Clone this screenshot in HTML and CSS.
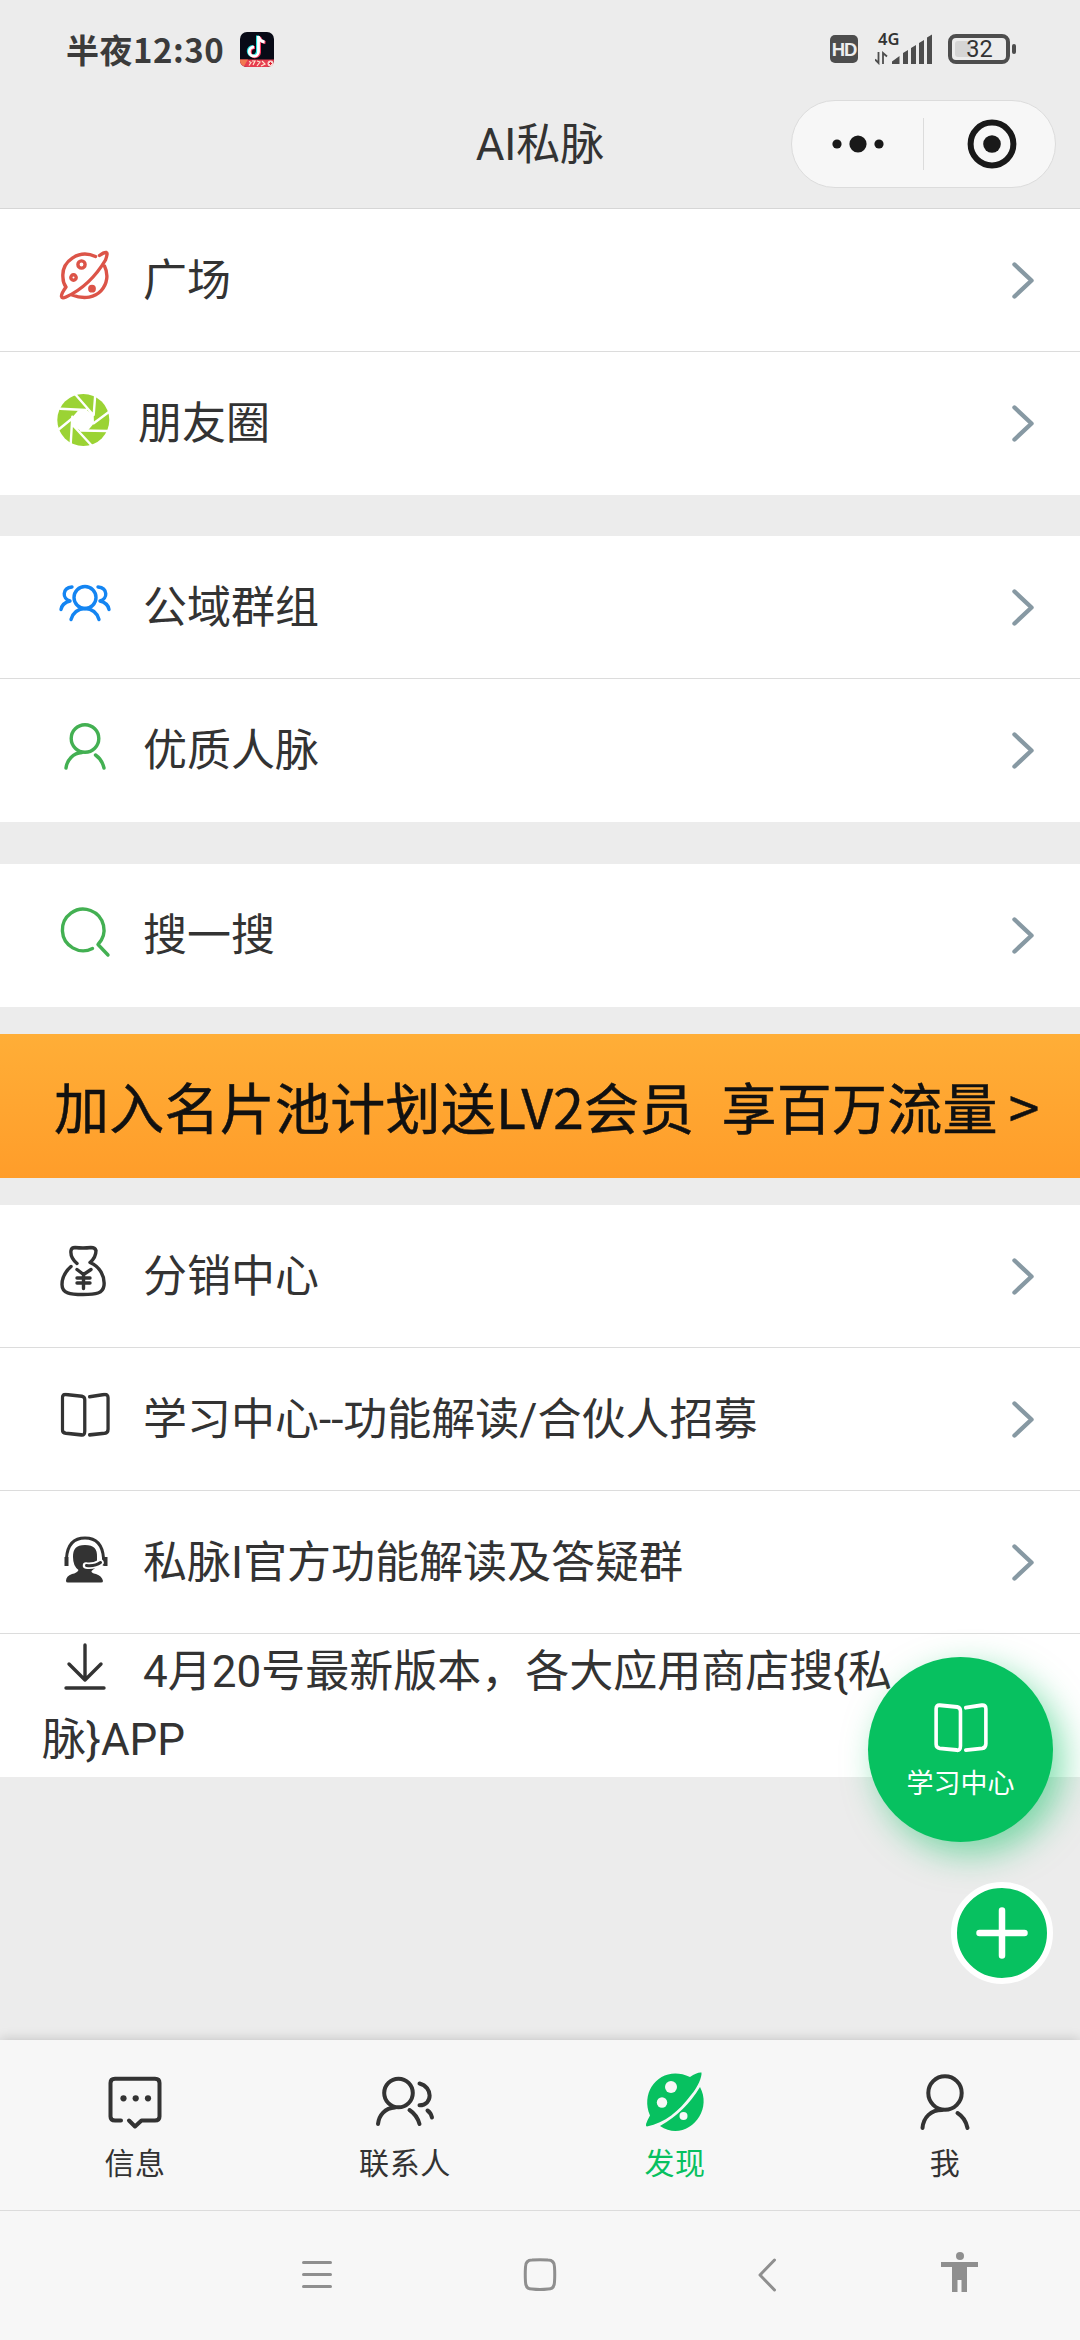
FILE: index.html
```html
<!DOCTYPE html>
<html lang="zh-CN">
<head>
<meta charset="utf-8">
<title>AI私脉</title>
<link rel="stylesheet" href="styles.css">
</head>
<body>
<svg class="defs" aria-hidden="true">
  <symbol id="arrow" viewBox="0 0 24 40"><path d="M3.500 3.500L20.500 19.500L3.500 35.500"/></symbol>
  <symbol id="book" viewBox="0 1 51 43" preserveAspectRatio="none"><path d="M5.500 3L22 4.500Q25 5 25 8V38Q25 42 21.500 41.500L5.500 40Q2 39.500 2 36.500V6Q2 2.700 5.500 3Z M30 5L45 3Q49 2.500 49 6V36Q49 39.500 45.500 40L30 41.500"/></symbol>
</svg>
<div class="phone">
  <header class="top">
    <div class="status">
      <div class="clock">半夜12:30</div>
      <svg class="app" viewBox="0 0 34 35">
        <rect width="34" height="35" rx="7" fill="#080a16"/>
        <path d="M0 27.500H34V28Q34 35 27 35H7Q0 35 0 28Z" fill="#e63d50"/>
        <path d="M0 27.500H8L4 34Q0 32 0 28Z" fill="#f27950"/>
        <path d="M17.500 3.500V19.500A4.600 4.600 0 1 1 13 14.500M17.500 4Q19 9 24 9.500" fill="none" stroke="#24dfe0" stroke-width="3"/>
        <path d="M19.500 5V20.500A4.600 4.600 0 1 1 15 15.500M19.500 5Q21 10 25.500 10.500" fill="none" stroke="#fb3b62" stroke-width="3"/>
        <path d="M18.500 4V20A4.600 4.600 0 1 1 14 15M18.500 4.500Q20 9.500 24.500 10" fill="none" stroke="#fff" stroke-width="2.800"/>
        <path d="M9 29.500l2 1-2 3M12 29h3l-2 4M17 29l3 1-3 4M22 29l3 3-4 2" fill="none" stroke="#ffe4cf" stroke-width="1.200"/>
        <circle cx="30.500" cy="31.500" r="3" fill="#fbd2cf"/><path d="M29 31.500h3M30.500 30v3" stroke="#d23" stroke-width="1"/>
      </svg>
      <div class="signals">
        <div class="hd">HD</div>
        <div class="mobile">
          <span class="net">4G</span>
          <svg class="bars" viewBox="0 0 58 32"><path d="M3.500 19V30L0 26.500M8 31V20L12 23.500" fill="none" stroke="#4d4d4d" stroke-width="1.800"/><path d="M17 31L17 28.500L24.500 23V31Z M28 31V20L33 17V31Z M36 31V15L41 12V31Z M44 31V10L49 7V31Z M52 31V4.500L57 1.500V31Z" fill="#4d4d4d"/></svg>
        </div>
        <div class="battery"><span class="cell"><i></i><b>32</b></span><em></em></div>
      </div>
    </div>
    <div class="nav">
      <h1>AI私脉</h1>
      <div class="capsule">
        <svg class="dots" viewBox="0 0 52 20"><circle cx="5" cy="10" r="4.600"/><circle cx="26" cy="10" r="8.600"/><circle cx="47" cy="10" r="4.600"/></svg>
        <span class="split"></span>
        <svg class="target" viewBox="0 0 50 50"><circle cx="25" cy="25" r="21.400" fill="none" stroke="#191919" stroke-width="6"/><circle cx="25" cy="25" r="8.800"/></svg>
      </div>
    </div>
  </header>

  <main>
    <section class="group">
      <div class="row">
        <svg class="ic red" viewBox="0 0 56 56"><path d="M38.500 7.500C22 0 4 12 6 29Q6 34 9 38Q4 45 4.500 47.500Q5 50 9 48Q33 37 48.500 11Q51 4 49.500 3.500Q47 3 42.500 6.500M47.500 17C56 34 41 56 15 46"/><circle cx="24.500" cy="15.500" r="3.600"/><circle cx="16.500" cy="28.500" r="2.700"/><circle cx="35" cy="39.700" r="2.200" fill="#dc5448"/></svg>
        <span class="label">广场</span><svg class="arrow"><use href="#arrow"/></svg>
      </div>
      <div class="row moments">
        <svg class="ic" viewBox="0 0 56 56"><circle cx="28.300" cy="28" r="26" fill="#9bd334"/><path d="M22.700 19L31 17.500L38.700 23L39 31.300L33.300 38L26 38.700L18 34.700L17.300 25.300Z" fill="#fff"/><path d="M20 2L38.300 23M40.200 3L38.700 23M54.500 19.500L38.700 31.300M53 39L26 38.500M38 55L17.700 33M15.700 52L17.300 24.700M3 38L17.700 26M5 16.800L31 18" fill="none" stroke="#fff" stroke-width="2.400"/></svg>
        <span class="label">朋友圈</span><svg class="arrow"><use href="#arrow"/></svg>
      </div>
    </section>
    <section class="group">
      <div class="row">
        <svg class="ic blue" viewBox="0 0 56 56"><circle cx="28" cy="21.500" r="11"/><path d="M28 32.500Q17 33 14 43.500M28 32.500Q39 33 42 43.500M15 11C5 12 5 23 13 25Q5 27 4 33.500M41 11C51 12 51 23 43 25Q51 27 52 33.500"/></svg>
        <span class="label">公域群组</span><svg class="arrow"><use href="#arrow"/></svg>
      </div>
      <div class="row">
        <svg class="ic green" viewBox="0 0 56 56"><circle cx="28" cy="19.500" r="13.800"/><path d="M25 33.500C16 34 10 41 9 49M38.500 36Q45 40.500 47 49"/></svg>
        <span class="label">优质人脉</span><svg class="arrow"><use href="#arrow"/></svg>
      </div>
    </section>
    <section class="group search">
      <div class="row">
        <svg class="ic green" viewBox="0 0 56 56"><path d="M35.500 44.500A20.800 20.800 0 1 1 41 40.500L51 51"/></svg>
        <span class="label">搜一搜</span><svg class="arrow"><use href="#arrow"/></svg>
      </div>
    </section>
    <section class="banner"><span>加入名片池计划送LV2会员</span><span>享百万流量</span><span class="gt">&gt;</span></section>
    <section class="group">
      <div class="row">
        <svg class="ic" viewBox="0 1.500 56 56"><path d="M20 20Q13 14 14 7Q14.500 4 18 4Q26 5 34 4Q38 4 39 7Q39 14 33 19C43 23 48 33 47 42C46 50 39 51 26 51S5 50 5 41Q5 31 14 23M20 26L26.500 31L34 26M26.500 32V45M20 34.500H33M20 39.500H33"/></svg>
        <span class="label">分销中心</span><svg class="arrow"><use href="#arrow"/></svg>
      </div>
      <div class="row">
        <svg class="ic" viewBox="0 0 56 56"><use href="#book" x="3.500" y="4.500" width="49.500" height="45"/></svg>
        <span class="label">学习中心--功能解读/合伙人招募</span><svg class="arrow"><use href="#arrow"/></svg>
      </div>
      <div class="row">
        <svg class="ic agent" viewBox="0 0 56 56"><path d="M9.500 33V27Q11 7 28 7T46.500 27V33" fill="none" stroke="#333" stroke-width="3"/><path d="M7.500 26h4v9h-4ZM46.500 26h4v9h-4ZM28 14C19 14 16 18 16 26Q16 35 21.500 39Q20 42 15 43Q9 45 9 50Q9 51.500 11 51.500H44Q46 51.500 46 50Q45 45 39 43Q34 42 34.500 40L38 37L40 34V26C40.500 18 37 14 28 14Z"/><path d="M29 34.500Q37 35.500 43.500 31.500" fill="none" stroke="#fff" stroke-width="6.500" stroke-linecap="round"/><path d="M29.500 34.500Q38 35.500 43.500 31.500" fill="none" stroke="#333" stroke-width="3" stroke-linecap="round"/></svg>
        <span class="label">私脉I官方功能解读及答疑群</span><svg class="arrow"><use href="#arrow"/></svg>
      </div>
      <div class="row wrap"><p><svg class="ic" viewBox="0 0 56 56"><path d="M28 5V40M12 24L28 40L44 24M9 48H47"/></svg>4月20号最新版本，各大应用商店搜{私脉}APP</p></div>
    </section>
  </main>

  <a class="study"><svg viewBox="0 0 54 50"><use href="#book" width="54" height="50"/></svg><span>学习中心</span></a>
  <a class="add"><svg viewBox="0 0 52 52"><path d="M26 3.500V48.500M3.500 26H48.500"/></svg></a>

  <footer>
    <nav class="tabs">
      <a><svg viewBox="0 0 64 64"><path d="M18 51.500H12Q7.500 51.500 7.500 47.500V14Q7.500 9.800 12 9.800H52Q56.500 9.800 56.500 14V47.500Q56.500 51.500 52 51.500H38.500L32 57.500L26 51.500"/><g fill="#333" stroke="none"><circle cx="20.500" cy="29.300" r="3.100"/><circle cx="32.700" cy="29.300" r="3.100"/><circle cx="45" cy="29.300" r="3.100"/></g></svg><span>信息</span></a>
      <a><svg viewBox="0 0 64 64"><circle cx="25.500" cy="24" r="14.300"/><path d="M22 38.500C12 39 6 46 5 55M36.500 41Q44 46 46.500 55M46.500 14.500C60 18 60 36 46.500 36.300M54.500 41.500Q58 44 59 48.500"/></svg><span>联系人</span></a>
      <a class="on"><svg viewBox="0 0 64 64"><path d="M47 8Q54 3 58.500 3.500C59 8 55 18 48 26C36 42 22 54 4 57.500Q1 57 7 46.500C-4 20 20-5 47 8ZM57 18C71 44 42 74 17 57Q42 43 57 18Z" fill="#07c160" stroke="none"/><g fill="#f7f7f7" stroke="none"><circle cx="28" cy="18" r="6"/><circle cx="19" cy="33.500" r="5.200"/><circle cx="40.500" cy="47" r="4"/></g></svg><span>发现</span></a>
      <a><svg viewBox="0 0 64 64"><circle cx="32" cy="24" r="16.700"/><path d="M29 41C18 41 10.500 48 9.500 59M44.500 44Q52.500 49 54.500 59"/></svg><span>我</span></a>
    </nav>
    <div class="system">
      <svg viewBox="0 0 1080 129"><g fill="none" stroke="#8f8f8f" stroke-width="3" stroke-linecap="round" stroke-linejoin="round"><path d="M303.500 51.500H330.500M303.500 63.500H330.500M303.500 75.500H330.500"/><path d="M525.500 56Q525.500 49 532 49Q540 48.500 548 49Q554.500 49 554.500 56Q555 63.500 554.500 71Q554.500 78 548 78Q540 79 532 78Q525.500 78 525.500 71Q525 63.500 525.500 56Z"/><path d="M774.500 49L760 64L774.500 79"/></g><g fill="#8f8f8f"><circle cx="960" cy="45" r="4"/><path d="M941 51H978V56H967V81H961.500V69H957.500V81H952V56H941Z"/></g></svg>
    </div>
  </footer>
</div>
</body>
</html>
```
FILE: styles.css
```css
* { box-sizing: border-box; }
body { margin: 0; background: #ececec; color: #333; font-family: Roboto, "Noto Sans CJK SC", sans-serif; }
.defs { position: absolute; width: 0; height: 0; }
.phone { position: relative; display: flex; flex-direction: column; width: 1080px; height: 2340px; overflow: hidden; background: #ececec; }
.top { height: 209px; border-bottom: 1px solid #d6d6d6; }
.status { display: flex; align-items: center; height: 100px; padding-left: 66px; }
.clock { width: 174px; margin-top: -3px; font: 600 33px/40px "Noto Sans CJK SC", sans-serif; letter-spacing: .5px; white-space: nowrap; color: #3b3b3b; }
.app { width: 34px; height: 35px; margin-top: -2px; }
.signals { display: flex; align-items: center; margin: -2px 0 0 auto; padding-right: 64px; }
.hd { width: 28px; height: 28px; border-radius: 5px; background: #4d4d4d; color: #eee; font: 700 18.5px/29px "Liberation Sans", sans-serif; letter-spacing: -1px; text-align: center; }
.mobile { display: flex; width: 58px; height: 32px; margin-left: 17px; position: relative; }
.bars { width: 58px; height: 32px; }
.net { position: absolute; left: 3px; top: -3px; font: 600 16.500px/18px "Noto Sans", sans-serif; }
.battery { display: flex; align-items: center; margin-left: 15px; gap: 2px; }
.cell { position: relative; width: 62px; height: 30px; border: 4px solid #4d4d4d; border-radius: 8px; text-align: center; }
.cell i { position: absolute; left: 3px; top: 3px; width: 16px; height: 16px; border-radius: 3px; background: #d5d5d5; }
.cell b { position: relative; display: block; padding-left: 1px; font: 400 23.500px/23px Roboto, sans-serif; }
.battery em { width: 4px; height: 10px; border-radius: 2px; background: #4d4d4d; }
.nav { display: grid; grid-template-columns: 1fr auto 1fr; align-items: center; height: 88px; padding-right: 24px; }
h1 { grid-column: 2; margin: 1px 0 0; padding-left: 24px; font-size: 44px; font-weight: 400; line-height: 60px; }
.capsule { justify-self: end; display: flex; align-items: center; width: 265px; height: 88px; border: 1px solid #dcdcdc; border-radius: 44px; background: #f7f7f7; fill: #191919; }
.dots { width: 52px; height: 20px; margin-left: 40px; }
.split { width: 1px; height: 52px; margin-left: 39px; background: #dcdcdc; }
.target { width: 50px; height: 50px; margin-left: 43px; }

.group { margin-bottom: 41px; background: #fff; }
.group + .group { margin-bottom: 42px; }
.group.search { margin-bottom: 27px; }
.row { display: flex; align-items: center; height: 143px; padding: 0 45px 0 57px; border-bottom: 1px solid #dcdcdc; }
.row:last-child { border-bottom-color: #fff; }
.label { margin: 2px 0 0 30px; font-size: 44px; line-height: 60px; white-space: nowrap; }
.moments .label { margin-left: 27px; }
.ic { flex: none; width: 56px; height: 56px; margin-top: -6px; fill: none; stroke: #333; stroke-width: 3.400; stroke-linecap: round; stroke-linejoin: round; }
.moments .ic { margin-left: -2px; stroke: none; }
.red { stroke: #dc5448; }
.blue { stroke: #1485f2; }
.green { stroke: #43b052; }
.agent { fill: #333; stroke: none; }
.arrow { width: 24px; height: 40px; margin: 1px 0 0 auto; fill: none; stroke: #8799a3; stroke-width: 4.400; stroke-linecap: round; stroke-linejoin: round; }
.wrap { padding: 0 180px 0 42px; }
.wrap p { width: 868px; margin: 2px 0 0; font-size: 44px; line-height: 68px; }
.wrap .ic { margin: 0 30px 0 15px; vertical-align: -9px; }
.banner { display: flex; align-items: center; height: 144px; margin-bottom: 27px; padding: 0 0 3px 54px; background: linear-gradient(#ffae37, #ff9d2a); color: #111; font: 400 55px/80px "Noto Sans CJK SC", sans-serif; letter-spacing: .25px; -webkit-text-stroke: .5px #111; white-space: nowrap; }
.banner span + span { margin-left: 27px; }
.banner .gt { margin-left: 11px !important; }

.study { position: absolute; left: 868px; top: 1657px; display: flex; flex-direction: column; align-items: center; width: 185px; height: 185px; padding-top: 46px; border-radius: 50%; background: #07c160; box-shadow: 10px 12px 34px rgba(7, 193, 96, .5); color: #fff; font-size: 27px; line-height: 36px; }
.study svg { width: 54px; height: 50px; margin-bottom: 13px; fill: none; stroke: #fff; stroke-width: 3.400; stroke-linecap: round; stroke-linejoin: round; }
.add { position: absolute; left: 951px; top: 1882px; display: grid; place-items: center; width: 102px; height: 102px; border: 6px solid #fff; border-radius: 50%; background: #07c160; }
.add svg { width: 52px; height: 52px; stroke: #fff; stroke-width: 6.500; stroke-linecap: round; }
footer { height: 300px; margin-top: auto; background: #f7f7f7; box-shadow: 0 0 12px rgba(0, 0, 0, .2); }
.tabs { display: grid; grid-template-columns: repeat(4, 1fr); height: 171px; border-bottom: 1px solid #dcdcdc; }
.tabs a { display: flex; flex-direction: column; align-items: center; padding-top: 29px; font-size: 30px; line-height: 40px; letter-spacing: .6px; }
.tabs svg { width: 64px; height: 64px; margin-bottom: 11px; overflow: visible; fill: none; stroke: #333; stroke-width: 4; stroke-linecap: round; stroke-linejoin: round; }
.tabs .on { color: #07c160; }
.system { height: 129px; }
.system svg { display: block; width: 1080px; height: 129px; }
```
